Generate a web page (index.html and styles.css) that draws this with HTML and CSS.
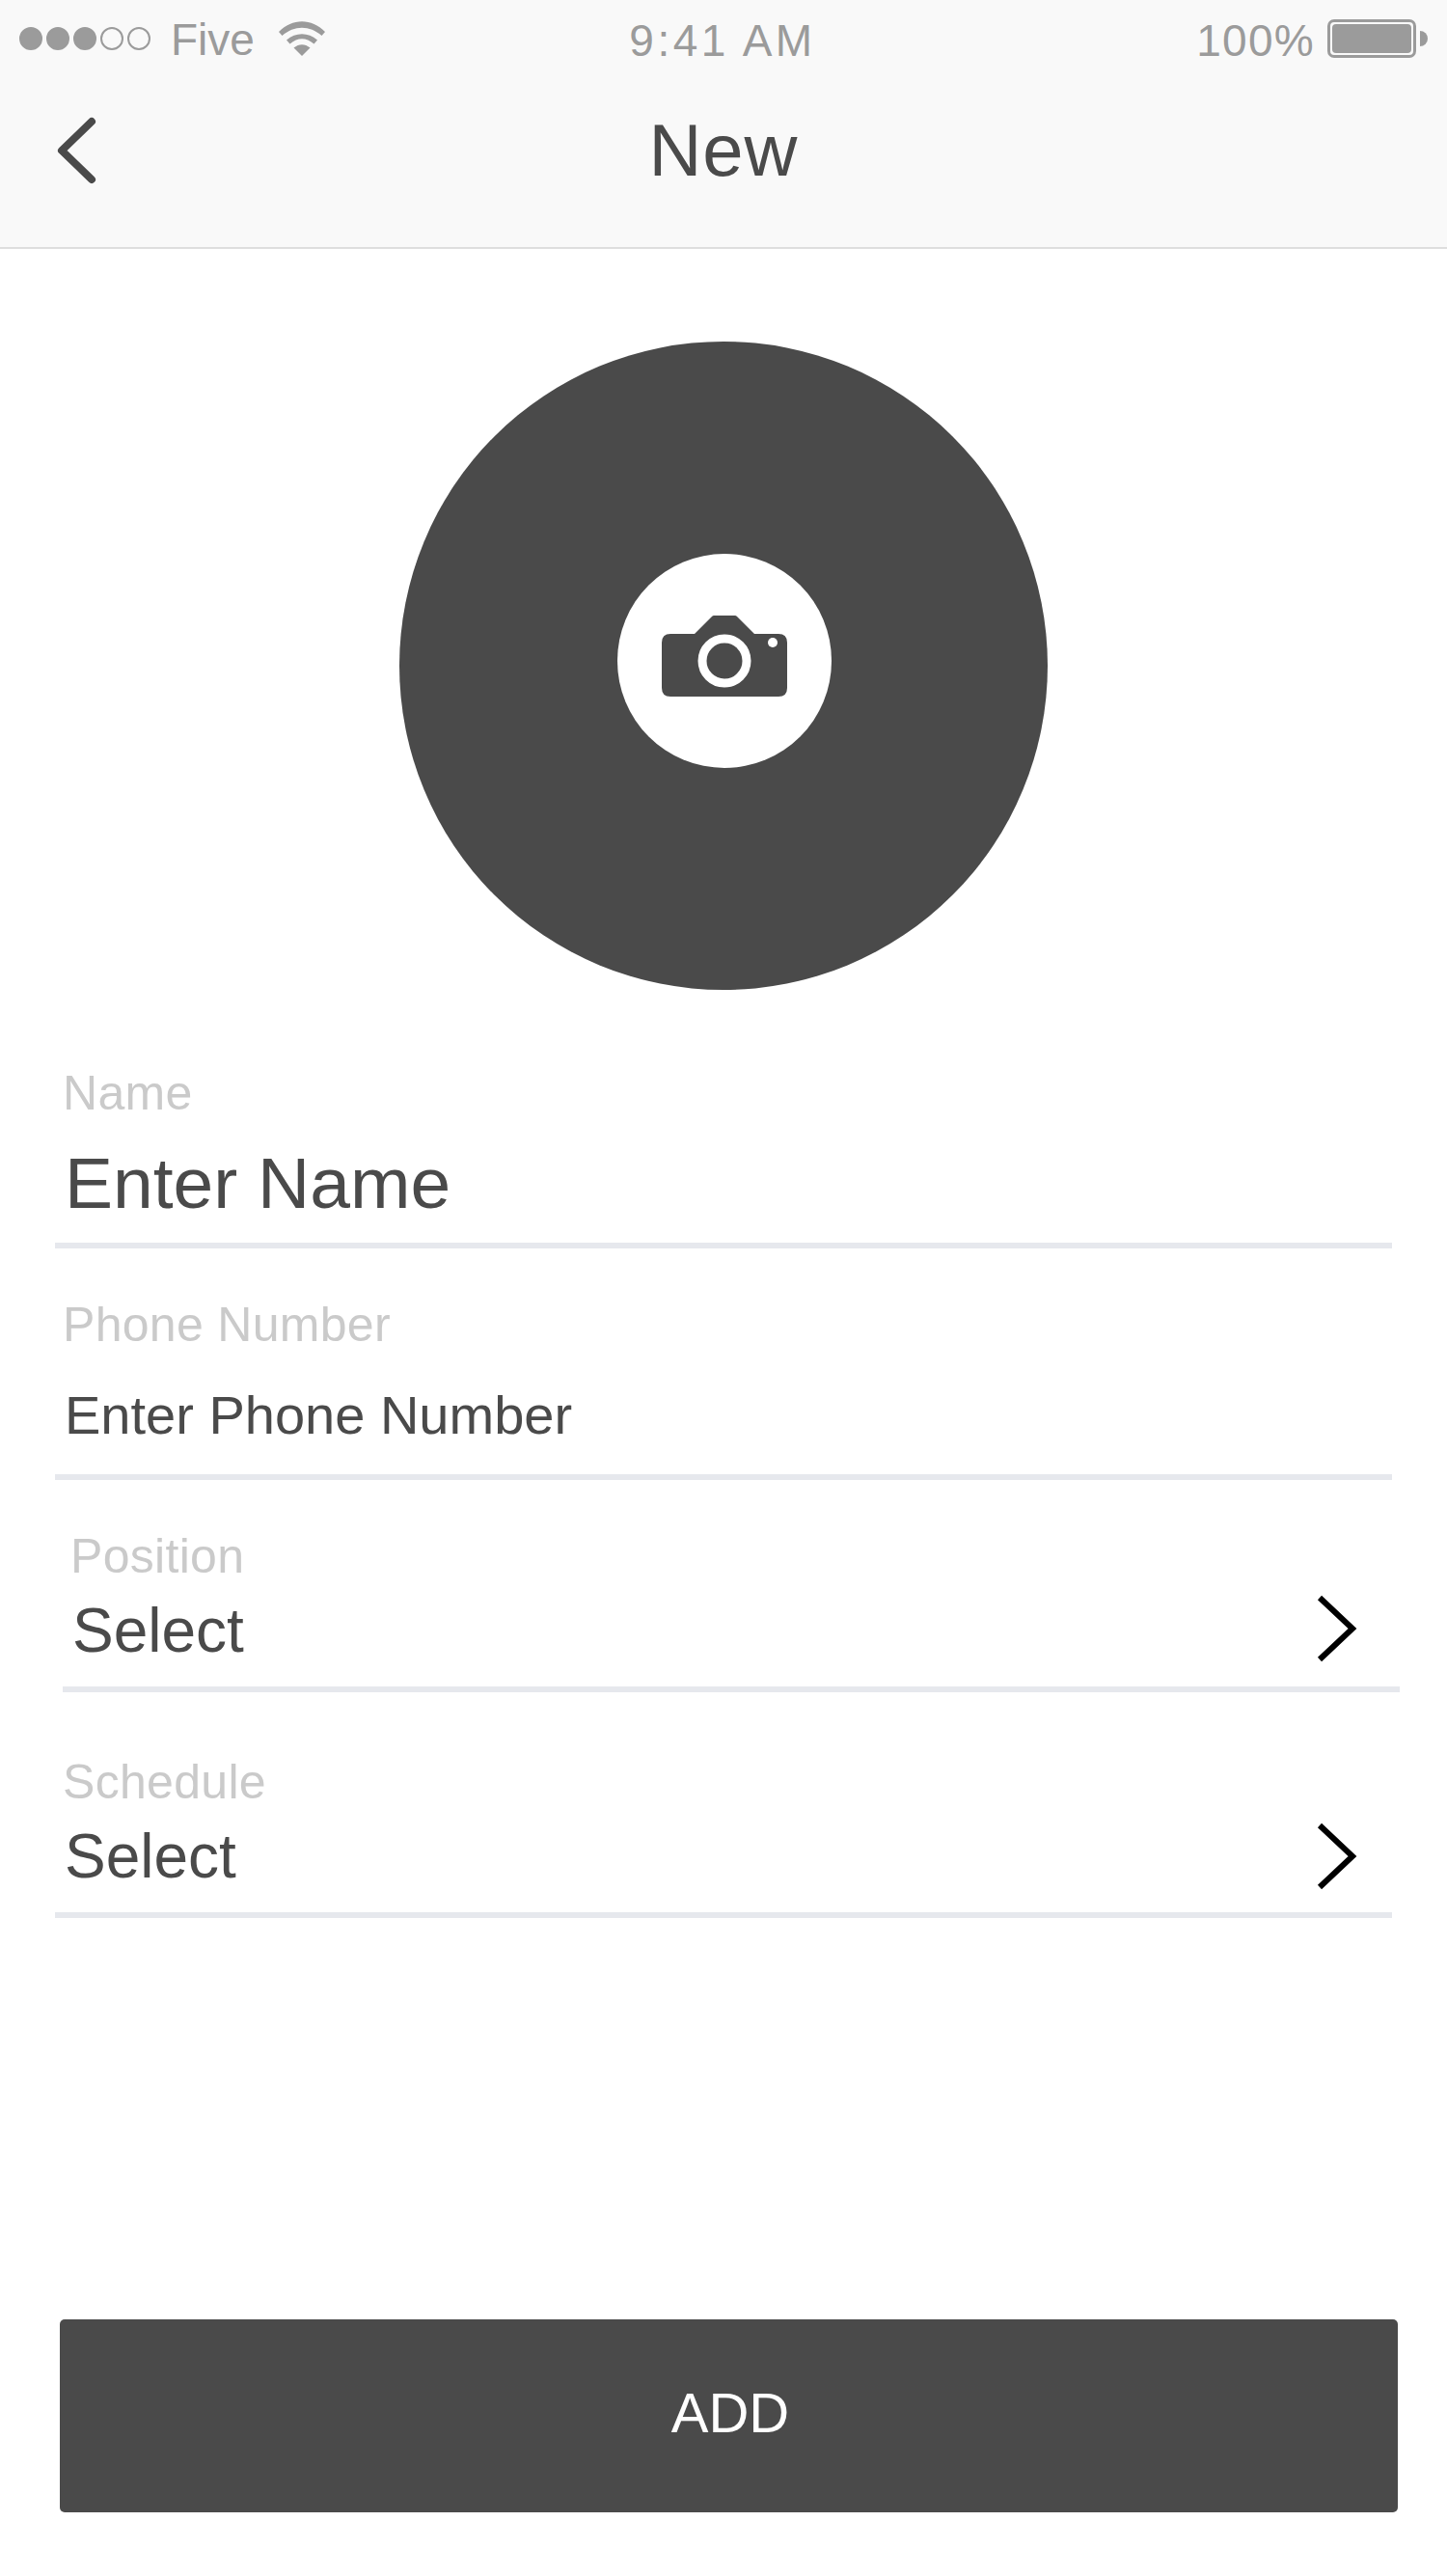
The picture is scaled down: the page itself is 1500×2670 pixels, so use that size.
FILE: index.html
```html
<!DOCTYPE html>
<html lang="en">
<head>
  <meta charset="UTF-8" />
  <meta name="viewport" content="width=device-width, initial-scale=1.0"/>
  <title>New</title>
  <link rel="stylesheet" href="styles.css">
</head>
<body>
  <header class="top">
    <div class="status">
      <div class="status-left">
        <span class="signal">
          <i class="dot on"></i><i class="dot on"></i><i class="dot on"></i><i class="dot"></i><i class="dot"></i>
        </span>
        <span class="carrier">Five</span>
        <svg class="wifi" width="48" height="36" viewBox="0 0 48 36">
          <path d="M0 11 C14 -3.500 34 -3.500 48 11 L44.500 15 C32 4 16 4 3.500 15 Z" fill="#9b9b9b"/>
          <path d="M8 19.500 C17.500 11 30.500 11 40 19.500 L36.500 23.500 C28 16.500 20 16.500 11.500 23.500 Z" fill="#9b9b9b"/>
          <path d="M15.500 27.500 C21 23 27 23 32.500 27.500 L24 36 Z" fill="#9b9b9b"/>
        </svg>
      </div>
      <span class="time">9:41 AM</span>
      <div class="status-right">
        <span class="percent">100%</span>
        <span class="battery"><span class="battery-fill"></span></span>
        <span class="battery-tip"></span>
      </div>
    </div>
    <div class="nav">
      <svg class="back" width="44" height="70" viewBox="0 0 44 70">
        <path d="M37 5 L6 35 L37 65" fill="none" stroke="#4a4a4a" stroke-width="8" stroke-linecap="round" stroke-linejoin="round"/>
      </svg>
      <h1 class="nav-title">New</h1>
    </div>
  </header>

  <main class="form">
    <div class="photo">
      <div class="photo-btn">
        <svg width="130" height="84" viewBox="0 0 130 84">
          <path d="M9 19 H34 L52 1 Q53 0 54 0 H76 Q77 0 78 1 L96 19 H121 Q130 19 130 28 V75 Q130 84 121 84 H9 Q0 84 0 75 V28 Q0 19 9 19 Z" fill="#4a4a4a"/>
          <circle cx="65" cy="47" r="23" fill="none" stroke="#fff" stroke-width="9"/>
          <circle cx="115" cy="28" r="5" fill="#fff"/>
        </svg>
      </div>
    </div>

    <div class="field field-name">
      <div class="field-label">Name</div>
      <div class="field-value value-lg">Enter Name</div>
    </div>
    <div class="field field-phone">
      <div class="field-label">Phone Number</div>
      <div class="field-value value-sm">Enter Phone Number</div>
    </div>
    <div class="field field-position">
      <div class="field-label">Position</div>
      <div class="field-value value-md">Select</div>
      <svg class="chevron" width="44" height="70" viewBox="0 0 44 70">
        <path d="M4 3 L38 35 L4 67" fill="none" stroke="#000" stroke-width="6"/>
      </svg>
    </div>
    <div class="field field-schedule">
      <div class="field-label">Schedule</div>
      <div class="field-value value-md">Select</div>
      <svg class="chevron" width="44" height="70" viewBox="0 0 44 70">
        <path d="M4 3 L38 35 L4 67" fill="none" stroke="#000" stroke-width="6"/>
      </svg>
    </div>

    <button class="add-btn">ADD</button>
  </main>
</body>
</html>
```
FILE: styles.css
```css
:root {
  --dark: #4a4a4a;
  --status: #9b9b9b;
  --label: #cacaca;
  --line: #e6e8ed;
}

* {
  box-sizing: border-box;
}

html, body {
  margin: 0;
  padding: 0;
}

body {
  width: 1500px;
  height: 2670px;
  background: #fff;
  color: var(--dark);
  font-family: "Liberation Sans", Arial, sans-serif;
}

.top {
  height: 258px;
  background: #f9f9f9;
  border-bottom: 2px solid #dedede;
}

.status {
  height: 84px;
  padding: 0 20px;
  display: flex;
  align-items: center;
  justify-content: space-between;
  color: var(--status);
  font-size: 46px;
  position: relative;
}

.status-left, .status-right {
  display: flex;
  align-items: center;
}

.signal {
  display: flex;
  gap: 4px;
  margin-bottom: 4px;
}

.dot {
  width: 24px;
  height: 24px;
  border-radius: 50%;
  border: 2px solid var(--status);
}

.dot.on {
  background: var(--status);
}

.carrier {
  margin-left: 21px;
  margin-bottom: 3px;
}

.wifi {
  margin-left: 25px;
  margin-bottom: 4px;
}

.time {
  position: absolute;
  left: 0;
  right: 0;
  padding-right: 2px;
  text-align: center;
  letter-spacing: 3.5px;
}

.percent {
  margin-right: 13px;
  letter-spacing: 1.3px;
}

.battery {
  width: 92px;
  height: 40px;
  margin-bottom: 4px;
  border: 3px solid var(--status);
  border-radius: 7px;
  padding: 2px;
  display: flex;
}

.battery-fill {
  flex: 1;
  background: var(--status);
  border-radius: 4px;
}

.battery-tip {
  width: 8px;
  height: 16px;
  margin-left: 4px;
  margin-bottom: 4px;
  background: var(--status);
  border-radius: 0 8px 8px 0;
}

.nav {
  height: 172px;
  padding-bottom: 28px;
  position: relative;
  display: flex;
  align-items: center;
  justify-content: center;
}

.back {
  position: absolute;
  left: 58px;
  top: 37px;
}

.nav-title {
  margin: 0;
  font-size: 76px;
  font-weight: normal;
  line-height: 1;
  letter-spacing: 1px;
}

.form {
  display: flex;
  flex-direction: column;
}

.photo {
  width: 672px;
  height: 672px;
  margin: 96px 0 0 414px;
  background: var(--dark);
  border-radius: 50%;
  display: flex;
  justify-content: center;
  padding-top: 220px;
}

.photo-btn {
  width: 222px;
  height: 222px;
  background: #fff;
  border-radius: 50%;
  display: flex;
  align-items: center;
  justify-content: center;
  margin-left: 2px;
}

.photo-btn svg {
  margin-bottom: 10px;
}

.field {
  width: 1386px;
  margin-left: 57px;
  border-bottom: 6px solid var(--line);
  position: relative;
  padding-left: 8px;
}

.field-label {
  font-size: 50px;
  line-height: 56px;
  letter-spacing: 0.3px;
  color: var(--label);
}

.field-value {
  padding-left: 2px;
}

.value-lg {
  font-size: 75px;
  line-height: 84px;
  margin-top: 23px;
  height: 104px;
}

.value-sm {
  font-size: 56px;
  line-height: 64px;
  margin-top: 34px;
  height: 93px;
}

.value-md {
  font-size: 64px;
  line-height: 72px;
  margin-top: 13px;
  height: 94px;
}

.field-name {
  margin-top: 79px;
}

.field-phone {
  margin-top: 51px;
}

.field-position {
  margin-top: 51px;
  margin-left: 65px;
}

.field-schedule {
  margin-top: 65px;
}

.chevron {
  position: absolute;
  right: 35px;
  bottom: 23px;
}

.field-position .chevron {
  right: 43px;
  bottom: 25px;
}

.add-btn {
  width: 1387px;
  height: 200px;
  margin: 416px 0 0 62px;
  padding: 0 0 8px 3px;
  background: var(--dark);
  color: #fff;
  border: none;
  border-radius: 5px;
  font-family: inherit;
  font-size: 58px;
}
```
